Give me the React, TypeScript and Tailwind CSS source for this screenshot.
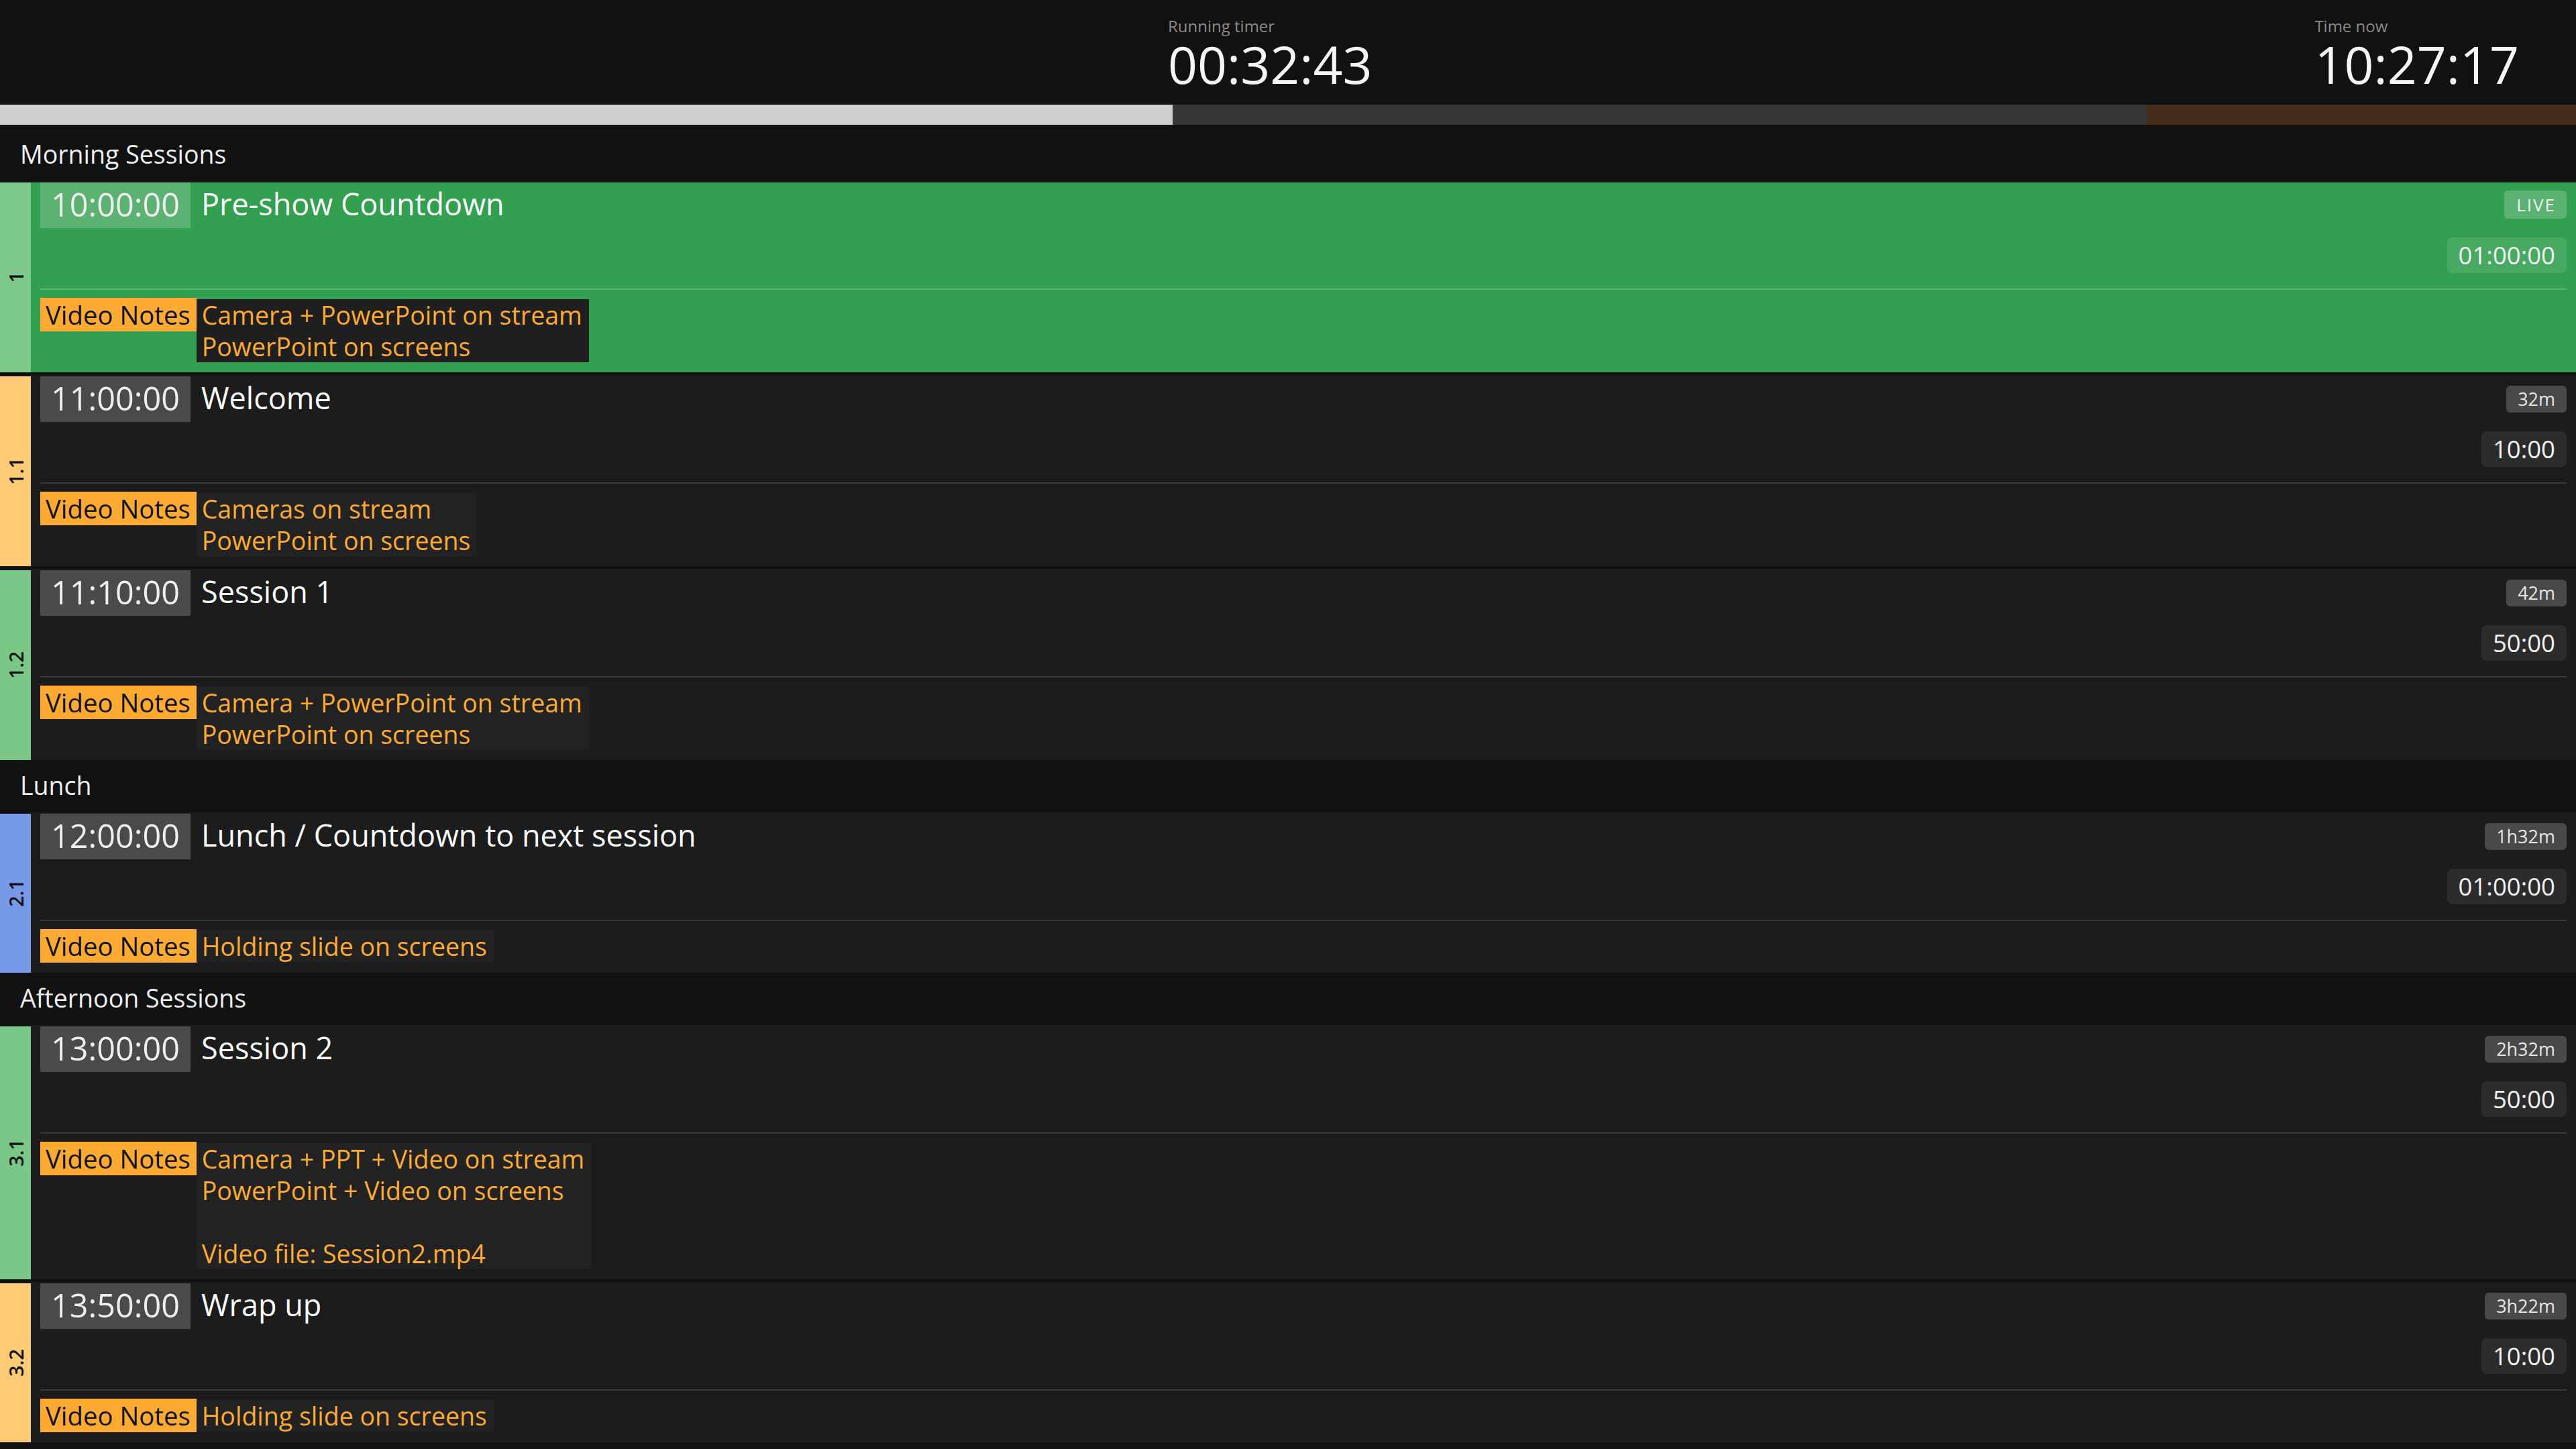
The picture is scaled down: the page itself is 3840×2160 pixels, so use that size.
import React from "react";

type Item = {
  idx: string;
  strip: string;
  start: string;
  title: string;
  badge: string;
  dur: string;
  notes: string[];
  live?: boolean;
};

type Group = { name: string; items: Item[] };

const GREEN = "#7ac787";
const ORANGE = "#ffcb77";
const BLUE = "#779ae8";

const groups: Group[] = [
  {
    name: "Morning Sessions",
    items: [
      {
        idx: "1",
        strip: "#7cc98b",
        start: "10:00:00",
        title: "Pre-show Countdown",
        badge: "LIVE",
        dur: "01:00:00",
        notes: ["Camera + PowerPoint on stream", "PowerPoint on screens"],
        live: true,
      },
      {
        idx: "1.1",
        strip: ORANGE,
        start: "11:00:00",
        title: "Welcome",
        badge: "32m",
        dur: "10:00",
        notes: ["Cameras on stream", "PowerPoint on screens"],
      },
      {
        idx: "1.2",
        strip: GREEN,
        start: "11:10:00",
        title: "Session 1",
        badge: "42m",
        dur: "50:00",
        notes: ["Camera + PowerPoint on stream", "PowerPoint on screens"],
      },
    ],
  },
  {
    name: "Lunch",
    items: [
      {
        idx: "2.1",
        strip: BLUE,
        start: "12:00:00",
        title: "Lunch / Countdown to next session",
        badge: "1h32m",
        dur: "01:00:00",
        notes: ["Holding slide on screens"],
      },
    ],
  },
  {
    name: "Afternoon Sessions",
    items: [
      {
        idx: "3.1",
        strip: GREEN,
        start: "13:00:00",
        title: "Session 2",
        badge: "2h32m",
        dur: "50:00",
        notes: [
          "Camera + PPT + Video on stream",
          "PowerPoint + Video on screens",
          "",
          "Video file: Session2.mp4",
        ],
      },
      {
        idx: "3.2",
        strip: ORANGE,
        start: "13:50:00",
        title: "Wrap up",
        badge: "3h22m",
        dur: "10:00",
        notes: ["Holding slide on screens"],
      },
    ],
  },
];

function Row({ item }: { item: Item }) {
  const live = !!item.live;
  return (
    <div className="flex">
      <div
        className="mt-[2px] w-[46px] shrink-0 flex items-center justify-center"
        style={{ backgroundColor: item.strip }}
      >
        <span className="[writing-mode:vertical-rl] rotate-180 text-[29px] font-semibold leading-none text-[#111111]">
          {item.idx}
        </span>
      </div>
      <div
        className={
          "flex-1 flex flex-col border-t-2 border-[#1a1a1a] pl-[14px] pr-[14px] pb-[15px] " +
          (live ? "bg-[#339f51]" : "bg-[#1c1c1c]")
        }
      >
        <div className="flex h-[158px]">
          <div
            className={
              "w-[224px] h-[68px] text-center text-[48.5px] leading-[64px] text-[#eeeeee] " +
              (live ? "bg-white/20" : "bg-[#4a4a4a]")
            }
          >
            {item.start}
          </div>
          <div className="ml-[16px] text-[45px] leading-[64px] text-[#fafafa] whitespace-nowrap">
            {item.title}
          </div>
          <div className="flex-1" />
          <div className="flex flex-col items-end pt-[12px]">
            {live ? (
              <div className="h-[42px] pl-[18px] pr-[16px] rounded-[6px] bg-white/20 text-[26px] leading-[42px] tracking-[2px] text-[#f2f2f2]">
                LIVE
              </div>
            ) : (
              <div className="mt-[2px] h-[40px] px-[17px] rounded-[6px] bg-[#494949] text-[27px] leading-[40px] text-[#e6e6e6]">
                {item.badge}
              </div>
            )}
            <div
              className={
                "mt-[28px] h-[53px] px-[17px] rounded-[8px] text-[36.5px] leading-[53px] text-[#f2f2f2] " +
                (live ? "bg-white/10" : "bg-[#2c2c2c]")
              }
            >
              {item.dur}
            </div>
          </div>
        </div>
        <div className={"h-[2px] " + (live ? "bg-white/20" : "bg-[#393939]")} />
        <div className="flex items-start pt-[12px]">
          <div className="h-[50px] pl-[8px] pr-[9px] bg-[#ffab33] text-[#111111] text-[38.3px] leading-[50px] whitespace-nowrap">
            Video Notes
          </div>
          <div
            className={
              "mt-[2px] pl-[8px] pr-[10px] text-[#ffab33] text-[37.5px] leading-[47px] " +
              (live ? "bg-[#1f1f1f]" : "bg-[#222222]")
            }
          >
            {item.notes.map((n, i) => (
              <div key={i} className="h-[47px] whitespace-nowrap">
                {n === "" ? "\u00a0" : n}
              </div>
            ))}
          </div>
        </div>
      </div>
    </div>
  );
}

export default function App() {
  return (
    <div className="min-h-[2160px] w-full bg-[#111111] font-['Open_Sans',sans-serif] text-white overflow-hidden">
      <header className="grid grid-cols-[1741px_1fr_auto] h-[156px] pr-[85px]">
        <div />
        <div className="pt-[25px] flex flex-col">
          <div className="text-[24px] leading-[28px] text-[#8a8a8a]">Running timer</div>
          <div className="mt-[3px] text-[77px] leading-[80px] text-[#f5f5f5]">00:32:43</div>
        </div>
        <div className="pt-[25px] flex flex-col">
          <div className="text-[24px] leading-[28px] text-[#8a8a8a]">Time now</div>
          <div className="mt-[3px] text-[77px] leading-[80px] text-[#f5f5f5]">10:27:17</div>
        </div>
      </header>
      <div className="flex h-[30px]">
        <div className="w-[1748px] bg-[#cfcfcf]" />
        <div className="w-[1452px] bg-[#363636]" />
        <div className="flex-1 bg-[#452b1a]" />
      </div>
      <main className="pt-[6px] flex flex-col">
        {groups.map((g) => (
          <section key={g.name} className="flex flex-col">
            <div className="h-[78px] pt-[14px] pl-[30px] text-[37.5px] leading-[47px] text-[#eeeeee]">
              {g.name}
            </div>
            <div className="flex flex-col gap-[4px]">
              {g.items.map((it) => (
                <Row key={it.idx} item={it} />
              ))}
            </div>
          </section>
        ))}
      </main>
    </div>
  );
}
